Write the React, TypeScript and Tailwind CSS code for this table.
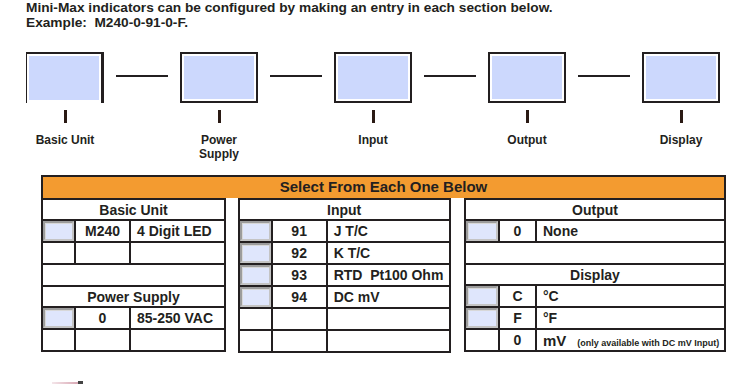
import React from "react";

const INK = "border-[#231f20]";

function InputBox() {
  return (
    <div className="h-full w-full border-2 border-t-[#9c9c9c] border-l-[#9c9c9c] border-b-[#c4c4c4] border-r-[#c4c4c4] bg-[#dfe6fc] shadow-[inset_1px_1px_0_#d8d8d8]" />
  );
}

type Row =
  | { kind: "head"; text: string }
  | { kind: "item"; input?: boolean; code?: string; desc?: React.ReactNode }
  | { kind: "blank" };

function SubTable({ widths, rows }: { widths: number[]; rows: Row[] }) {
  return (
    <table className="border-collapse table-fixed" style={{ width: widths.reduce((a, b) => a + b, 0) }}>
      <colgroup>
        {widths.map((w, i) => (
          <col key={i} style={{ width: w }} />
        ))}
      </colgroup>
      <tbody>
        {rows.map((r, i) => {
          if (r.kind === "head")
            return (
              <tr key={i}>
                <td colSpan={3} className={`h-[21px] border-2 ${INK} p-0 text-center text-[14px] font-bold leading-none`}>
                  {r.text}
                </td>
              </tr>
            );
          if (r.kind === "blank")
            return (
              <tr key={i}>
                <td colSpan={3} className={`h-[22px] border-2 ${INK} p-0`} />
              </tr>
            );
          return (
            <tr key={i}>
              <td className={`h-[22px] border-2 ${INK} p-0`}>{r.input ? <div className="h-[20px]"><InputBox /></div> : null}</td>
              <td className={`h-[22px] border-2 ${INK} p-0 text-center text-[14px] font-bold leading-none`}>{r.code}</td>
              <td className={`h-[22px] border-2 ${INK} py-0 pl-[6px] pr-0 text-left text-[14px] font-bold leading-none whitespace-nowrap`}>
                {r.desc}
              </td>
            </tr>
          );
        })}
      </tbody>
    </table>
  );
}

function Step({ label, first }: { label: React.ReactNode; first?: boolean }) {
  return (
    <div className="flex w-[78px] flex-col items-center">
      <div
        className={
          first
            ? "h-[51px] w-[78px] border-t-2 border-l border-r-[3px] border-[#231f20] bg-white p-[2px] pb-[3px]"
            : "h-[51px] w-[78px] border-2 border-[#231f20] bg-white p-[2px]"
        }
      >
        <div className="h-full w-full bg-[#ccd8fd]" />
      </div>
      <div className="mt-[7px] h-[13px] w-[3px] bg-[#2a1a14]" />
      <div className="mt-[10px] text-center text-[12px] font-bold leading-[14px]">{label}</div>
    </div>
  );
}

function Connector() {
  return (
    <div className="flex h-[51px] w-[76px] items-start justify-center pt-[23px]">
      <div className="h-[2px] w-[52px] bg-[#231f20]" />
    </div>
  );
}

export default function App() {
  return (
    <div
      className="relative h-[384px] w-[747px] overflow-hidden bg-white text-[#231f20]"
      style={{ fontFamily: '"Liberation Sans", Arial, sans-serif' }}
    >
      <div className="pl-[26px] pt-0 text-[13.7px] font-bold leading-[15px]">
        <div>Mini-Max indicators can be configured by making an entry in each section below.</div>
        <div>Example:&nbsp; M240-0-91-0-F.</div>
      </div>

      <div className="mt-[22px] flex items-start pl-[26px]">
        <Step label="Basic Unit" first />
        <Connector />
        <Step label={<>Power<br />Supply</>} />
        <Connector />
        <Step label="Input" />
        <Connector />
        <Step label="Output" />
        <Connector />
        <Step label="Display" />
      </div>

      <div className="absolute left-[41px] top-[175px] w-[685px]">
        <div className="flex h-[23px] items-center justify-center border-x-2 border-t-2 border-[#231f20] bg-[#f39b30] text-[15px] font-bold">
          Select From Each One Below
        </div>
        <div className="flex items-start">
          <SubTable
            widths={[33, 55, 95]}
            rows={[
              { kind: "head", text: "Basic Unit" },
              { kind: "item", input: true, code: "M240", desc: "4 Digit LED" },
              { kind: "item" },
              { kind: "blank" },
              { kind: "head", text: "Power Supply" },
              { kind: "item", input: true, code: "0", desc: "85-250 VAC" },
              { kind: "item" },
            ]}
          />
          <div className="w-[14px]" />
          <SubTable
            widths={[33, 55, 123]}
            rows={[
              { kind: "head", text: "Input" },
              { kind: "item", input: true, code: "91", desc: "J T/C" },
              { kind: "item", input: true, code: "92", desc: "K T/C" },
              { kind: "item", input: true, code: "93", desc: "RTD\u00a0 Pt100 Ohm" },
              { kind: "item", input: true, code: "94", desc: "DC mV" },
              { kind: "item" },
              { kind: "item" },
            ]}
          />
          <div className="w-[16px]" />
          <SubTable
            widths={[34, 37, 189]}
            rows={[
              { kind: "head", text: "Output" },
              { kind: "item", input: true, code: "0", desc: "None" },
              { kind: "blank" },
              { kind: "head", text: "Display" },
              { kind: "item", input: true, code: "C", desc: "°C" },
              { kind: "item", input: true, code: "F", desc: "°F" },
              {
                kind: "item",
                code: "0",
                desc: (
                  <span className="flex items-baseline">
                    <span className="text-[15px]">mV</span>
                    <span className="ml-[11px] text-[9px]">(only available with DC mV Input)</span>
                  </span>
                ),
              },
            ]}
          />
        </div>
      </div>

      <div className="absolute left-[52px] top-[381px] flex h-[3px] w-[34px] items-end">
        <div className="h-[2px] w-[26px] bg-gradient-to-r from-[#f4e6ea] to-[#d8a8b4]" />
        <div className="h-[3px] w-[5px] bg-[#444]" />
      </div>
    </div>
  );
}
